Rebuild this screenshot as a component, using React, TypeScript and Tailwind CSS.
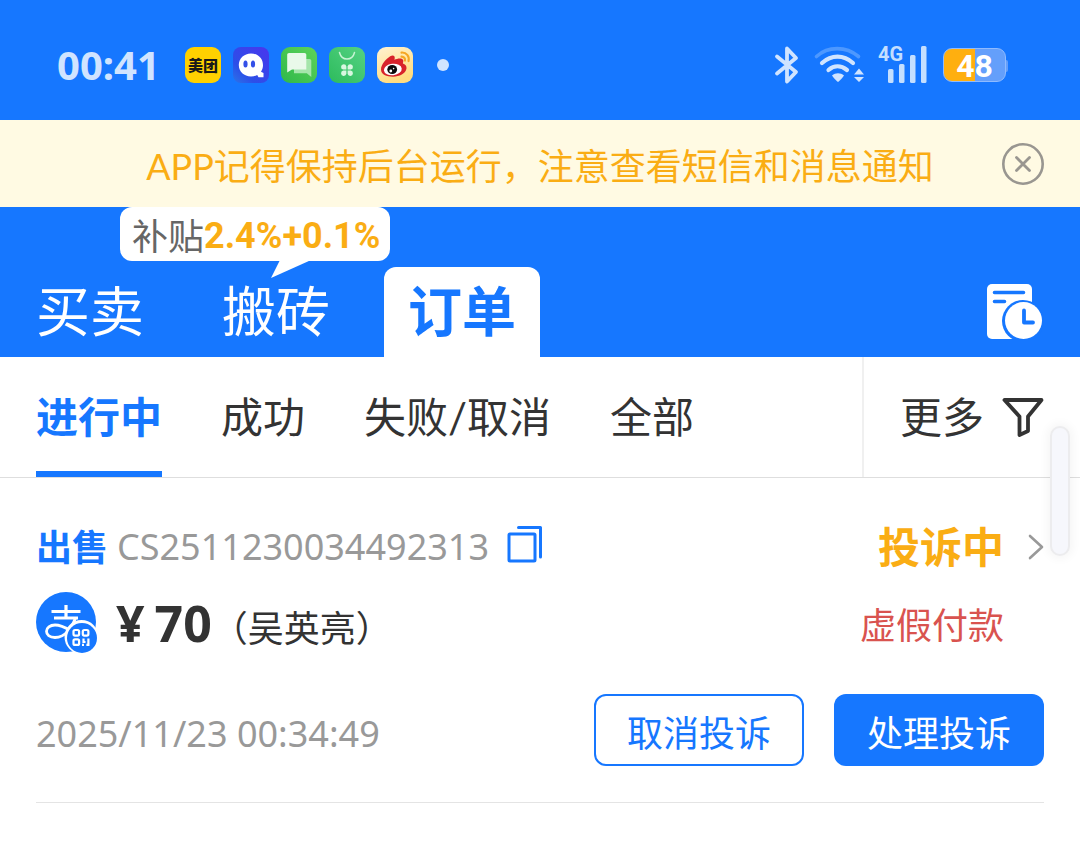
import React from "react";

const SANS = "font-['Lato','Noto_Sans_CJK_SC',sans-serif]";
const STATUS = "font-['Noto_Sans','Noto_Sans_CJK_SC',sans-serif]";

function GhostIcon() {
  return (
    <svg viewBox="0 0 36 36" className="size-9">
      <defs>
        <linearGradient id="ghost-bg" x1="0" y1="1" x2="1" y2="0">
          <stop offset="0" stopColor="#2b74e8" />
          <stop offset="0.3" stopColor="#2c4fe8" />
          <stop offset="1" stopColor="#4a35ee" />
        </linearGradient>
      </defs>
      <rect width="36" height="36" rx="8" fill="url(#ghost-bg)" />
      <path
        d="M18 6.500c7 0 12 5 12 11.700 0 2.500-.8 4.700-2 6.500l2.500 1.300v4.200h-5l-1.300-2.200c-1.800 1-3.800 1.500-6.200 1.500-7 0-12.200-4.800-12.200-11.400S11 6.500 18 6.500Z"
        fill="#fff"
      />
      <ellipse cx="12.500" cy="17" rx="2.100" ry="3.500" fill="#3450e8" />
      <ellipse cx="20" cy="17" rx="2.100" ry="3.500" fill="#3450e8" />
    </svg>
  );
}

function MessagesIcon() {
  return (
    <svg viewBox="0 0 36 36" className="size-9">
      <defs>
        <linearGradient id="msg-bg" x1="0" y1="1" x2="1" y2="0">
          <stop offset="0" stopColor="#2fb84a" />
          <stop offset="1" stopColor="#5ed35a" />
        </linearGradient>
      </defs>
      <rect width="36" height="36" rx="9" fill="url(#msg-bg)" />
      <path d="M13 12h15.500c1 0 1.800.8 1.800 1.800V30l-4.500-3.700H13Z" fill="#a5e5ab" />
      <path d="M8 6h15.500c1 0 1.800.8 1.800 1.800v14.700H11L6.200 25.500V7.800C6.200 6.800 7 6 8 6Z" fill="#e9f9ea" />
    </svg>
  );
}

function StoreIcon() {
  return (
    <svg viewBox="0 0 36 36" className="size-9">
      <defs>
        <linearGradient id="store-bg" x1="0" y1="1" x2="1" y2="0">
          <stop offset="0" stopColor="#2dbb5c" />
          <stop offset="1" stopColor="#55d283" />
        </linearGradient>
      </defs>
      <rect width="36" height="36" rx="9" fill="url(#store-bg)" />
      <path d="M10.500 5.500c1 4 4 6.500 7.500 6.500s6.500-2.500 7.500-6.500" fill="none" stroke="#c6f3d3" strokeWidth="1.500" strokeLinecap="round" />
      <g fill="#d8f7e0">
        <path d="M17.400 22.600h-3.200a2.700 2.700 0 1 1 3.200-3.200Z" />
        <path d="M18.600 22.600h3.200a2.700 2.700 0 1 0-3.200-3.200Z" />
        <path d="M17.400 23.600h-3.200a2.700 2.700 0 1 0 3.200 3.200Z" />
        <path d="M18.600 23.600h3.200a2.700 2.700 0 1 1-3.200 3.200Z" />
      </g>
    </svg>
  );
}

function WeiboIcon() {
  return (
    <svg viewBox="0 0 36 36" className="size-9">
      <defs>
        <linearGradient id="weibo-bg" x1="0" y1="0" x2="0.4" y2="1">
          <stop offset="0" stopColor="#fff3d2" />
          <stop offset="1" stopColor="#ffdc80" />
        </linearGradient>
      </defs>
      <rect width="36" height="36" rx="9" fill="url(#weibo-bg)" />
      <path
        d="M4 22.500c0-5 5-10.500 9.200-13.200 2.600-1.600 5-.9 4.500 2.200l-.3 1.300c3-1.600 8.200-2.300 8.800.5.300 1.300-.3 2.500-.3 3.200 2.200.7 4 2.200 3.600 5-.8 5-7 8.200-13.500 8.200S4 27.500 4 22.500Z"
        fill="#d8232a"
      />
      <ellipse cx="15.800" cy="22.500" rx="9" ry="5.700" transform="rotate(-7 15.800 22.500)" fill="#fff" />
      <ellipse cx="15.200" cy="22.500" rx="4.900" ry="4.500" fill="#0b0b0b" />
      <circle cx="13.800" cy="24" r="1.400" fill="#fff" />
      <circle cx="16.600" cy="21.600" r="0.800" fill="#fff" />
      <path d="M24.500 5.600c4.800-.4 8.300 3.800 7 8.500M24.500 9.600c2.300-.1 4 1.900 3.400 4" fill="none" stroke="#f5a623" strokeWidth="2.100" strokeLinecap="round" />
    </svg>
  );
}

function BluetoothIcon() {
  return (
    <svg viewBox="0 0 26 40" className="h-10 w-[26px]">
      <path d="M3 11.500 22 27l-9 9.500v-33L22 13 3 28.500" fill="none" stroke="#d0e4ff" strokeWidth="3.800" strokeLinecap="round" strokeLinejoin="round" />
    </svg>
  );
}

function WifiIcon() {
  return (
    <svg viewBox="0 0 52 40" className="h-10 w-[52px]">
      <g fill="none" strokeWidth="4.200" strokeLinecap="round">
        <path d="M4.500 11.500C16 1 34 1 46.500 11.500" stroke="#4d98ff" strokeWidth="3.600" />
        <path d="M10 18c9.500-8.500 21.500-8.500 31 0" stroke="#d0e4ff" />
        <path d="M16.500 25c5.500-4.800 12.500-4.800 18.500 0" stroke="#d0e4ff" />
      </g>
      <path d="M20 30.500c3.500-3 8.500-3 12 0 0 0-3.500 5-6 6.500C23.500 35.500 20 30.500 20 30.500Z" fill="#d0e4ff" />
      <path d="m47 23.500 5 6H42ZM47 37l5-5H42Z" fill="#d0e4ff" />
    </svg>
  );
}

function SignalIcon() {
  return (
    <svg viewBox="0 0 39 38" className="h-[38px] w-[39px]">
      <g fill="#c4dfff">
        <rect x="0" y="23" width="5.500" height="14" rx="1.500" />
        <rect x="11" y="18" width="5.500" height="19" rx="1.500" />
        <rect x="22" y="9" width="5.500" height="28" rx="1.500" />
        <rect x="33" y="0" width="5.500" height="37" rx="1.500" />
      </g>
    </svg>
  );
}

function StatusBar() {
  return (
    <div className={`flex h-[120px] items-center justify-between bg-[#1677ff] pt-[10px] pr-[74px] pl-[57px] ${STATUS}`}>
      <div className="flex items-center">
        <span className="w-32 text-[40px] leading-[54px] font-bold text-[#d0e4ff]">00:41</span>
        <div className="flex items-center gap-3">
          <span className="flex size-9 items-center justify-center rounded-[9px] bg-[#ffd100] text-[15px] leading-5 font-black text-[#1a1a1a]">
            美团
          </span>
          <GhostIcon />
          <MessagesIcon />
          <StoreIcon />
          <WeiboIcon />
        </div>
        <span className="ml-6 size-3 rounded-full bg-[#d0e4ff]" />
      </div>
      <div className="flex items-center">
        <BluetoothIcon />
        <div className="ml-3">
          <WifiIcon />
        </div>
        <div className="relative ml-6">
          <SignalIcon />
          <span className="absolute -top-1 -left-[10px] font-['Roboto',sans-serif] text-[20px] leading-6 font-bold text-[#c4dfff]">4G</span>
        </div>
        <div className="relative ml-4 flex h-[34px] w-[63px] items-center justify-center rounded-[9px] border border-[#8fbbff] bg-linear-to-r from-[#ffaf0f] from-50% to-[#649ffb] to-50%">
          <span className="pt-[2px] font-['Roboto',sans-serif] text-[32px] leading-8 font-bold text-white">48</span>
          <span className="absolute top-[11px] -right-[3px] h-3 w-[2px] rounded-r bg-[#649ffb]" />
        </div>
      </div>
    </div>
  );
}

function Banner() {
  return (
    <div className="flex h-[87px] items-center justify-between bg-[#fffae3] px-9">
      <span className="w-[42px]" />
      <p className="pt-1 text-[36px] leading-[52px] whitespace-nowrap text-[#faad14]">APP记得保持后台运行，注意查看短信和消息通知</p>
      <button aria-label="关闭" className="size-[42px]">
        <svg viewBox="0 0 42 42" className="size-[42px]" fill="none" stroke="#999690">
          <circle cx="21" cy="21" r="19.700" strokeWidth="2.600" />
          <path d="m14.500 14.500 13 13m0-13-13 13" strokeWidth="2.800" strokeLinecap="round" />
        </svg>
      </button>
    </div>
  );
}

function Header() {
  return (
    <header className="flex h-[150px] items-end justify-between bg-[#1677ff] pr-9 pl-3">
      <nav className="flex gap-[30px] text-[54px] leading-[90px] text-white">
        <button className="h-[90px] px-6">买卖</button>
        <div className="relative">
          <button className="h-[90px] px-6">搬砖</button>
          <div className="absolute -top-[60px] -left-[78px] flex h-[54px] w-[270px] items-center rounded-xl bg-white pt-1 pl-3 text-[36px] leading-[50px] whitespace-nowrap">
            <span className="text-[#666]">补贴</span>
            <span className="font-['Roboto',sans-serif] font-bold text-[#faad14]">2.4%+0.1%</span>
            <svg viewBox="0 0 40 18" className="absolute top-[53px] left-[150px] h-[18px] w-10">
              <path d="M10 0h31L1 18Z" fill="#fff" />
            </svg>
          </div>
        </div>
        <button className="h-[90px] rounded-t-xl bg-white px-6 font-bold text-[#1677ff]">订单</button>
      </nav>
      <button aria-label="订单记录" className="mb-[17px] h-[57px] w-[58px]">
        <svg viewBox="0 0 58 57" className="h-[57px] w-[58px]">
          <rect x="1" y="1" width="45" height="55" rx="5" fill="#fff" />
          <path d="M8.500 9.500h29M8.500 18.500h10" stroke="#1677ff" strokeWidth="3.600" strokeLinecap="round" />
          <circle cx="37" cy="38" r="21" fill="#1677ff" />
          <circle cx="37.500" cy="37.500" r="18.500" fill="#fff" />
          <path d="M38 27.500V39.500h9" fill="none" stroke="#1677ff" strokeWidth="3.800" strokeLinecap="round" strokeLinejoin="round" />
        </svg>
      </button>
    </header>
  );
}

const filters = ["成功", "失败/取消", "全部"];

function FilterBar() {
  return (
    <div className="flex h-[121px] justify-between border-b border-[#dedede] text-[42px] leading-[120px] text-[#333]">
      <nav className="flex gap-[59px] pl-9">
        <button className="h-[120px] border-b-[6px] border-[#1677ff] font-bold text-[#1677ff]">进行中</button>
        {filters.map((label) => (
          <button key={label} className="h-[120px]">
            {label}
          </button>
        ))}
      </nav>
      <button className="flex h-[120px] items-center gap-[18px] border-l-2 border-[#f0f0f0] pr-9 pl-9">
        更多
        <svg viewBox="0 0 42 40" className="h-10 w-[42px]" fill="none" stroke="#333" strokeWidth="3.800" strokeLinejoin="round">
          <path d="M2.500 3h37L26 19.500V34l-8.500 4V19.500Z" />
        </svg>
      </button>
    </div>
  );
}

function AlipayIcon() {
  return (
    <svg viewBox="0 0 62 62" className="size-[62px]">
      <circle cx="30" cy="30" r="30" fill="#1677ff" />
      <g fill="none" stroke="#fff">
        <path d="M30 13v12M15.500 19.500h29M18 26h24" strokeWidth="3.200" />
        <path d="M39.500 26c-3 9-10 19.500-20.500 19.500-5.500 0-8.500-2.700-8.500-6.200s3.500-6.300 8.500-6.300c8 0 14 5 20 8" strokeWidth="2.800" />
      </g>
      <circle cx="45.500" cy="45" r="17" fill="#fff" />
      <circle cx="46" cy="46" r="15" fill="#1677ff" />
      <g fill="none" stroke="#fff" strokeWidth="2.200">
        <rect x="37.500" y="38" width="5.600" height="5.600" rx="1.500" />
        <rect x="46.800" y="38" width="5.600" height="5.600" rx="1.500" />
        <rect x="37.500" y="47.300" width="5.600" height="5.600" rx="1.500" />
        <path d="M47.500 46.500v3.500h2M52.400 46.500v6.400h-2M46 52.900h2" />
      </g>
    </svg>
  );
}

function OrderCard() {
  return (
    <article className="mx-9 border-b border-[#e4e4e4] pt-9 pb-9">
      <div className="flex h-[66px] items-center justify-between">
        <div className="flex items-center">
          <span className="text-[36px] leading-[66px] font-bold text-[#1677ff]">出售</span>
          <span className={`ml-[9px] text-[36px] leading-[66px] text-[#999] ${STATUS}`}>CS2511230034492313</span>
          <button aria-label="复制订单号" className="mb-[6px] ml-[18px]">
            <svg viewBox="0 0 36 38" className="h-[38px] w-9" fill="none" stroke="#1677ff" strokeWidth="3">
              <rect x="2" y="9" width="26" height="27" rx="1" />
              <path d="M11.500 2.500h22V32" strokeLinecap="round" strokeLinejoin="round" />
            </svg>
          </button>
        </div>
        <a href="#order" className="flex items-center gap-6 text-[42px] leading-[66px] font-bold text-[#faad14]">
          投诉中
          <svg viewBox="0 0 16 26" className="h-[26px] w-4" fill="none" stroke="#999" strokeWidth="2.600" strokeLinecap="round" strokeLinejoin="round">
            <path d="m2 2 12 11L2 24" />
          </svg>
        </a>
      </div>
      <div className="mt-[7px] flex h-[72px] items-center justify-between pr-10">
        <div className="flex items-center text-[#333]">
          <AlipayIcon />
          <span className={`ml-[18px] flex items-center gap-[10px] text-[50px] leading-[72px] font-bold ${STATUS}`}>
            <span>¥</span>
            <span>70</span>
          </span>
          <span className="pt-[10px] text-[36px] leading-[52px]">（吴英亮）</span>
        </div>
        <span className="pt-1 text-[36px] leading-[52px] text-[#d9534f]">虚假付款</span>
      </div>
      <div className="mt-[35px] flex h-[72px] items-center justify-between">
        <time className={`pt-2 text-[36px] leading-[52px] text-[#999] ${STATUS}`}>2025/11/23 00:34:49</time>
        <div className="flex gap-[30px] text-[36px] leading-[52px]">
          <button className="h-[72px] w-[210px] rounded-xl border-2 border-[#1677ff] pt-[6px] text-[#1677ff]">取消投诉</button>
          <button className="h-[72px] w-[210px] rounded-xl bg-[#1677ff] pt-[6px] text-white">处理投诉</button>
        </div>
      </div>
    </article>
  );
}

export default function App() {
  return (
    <div className={`relative min-h-screen bg-white ${SANS}`}>
      <StatusBar />
      <Banner />
      <Header />
      <FilterBar />
      <OrderCard />
      <div className="absolute top-[426px] right-[10px] h-[130px] w-5 rounded-full border-2 border-[#ececee] bg-[#f6f7fc] shadow-[0_0_10px_3px_rgba(0,0,0,0.04)]" />
    </div>
  );
}
